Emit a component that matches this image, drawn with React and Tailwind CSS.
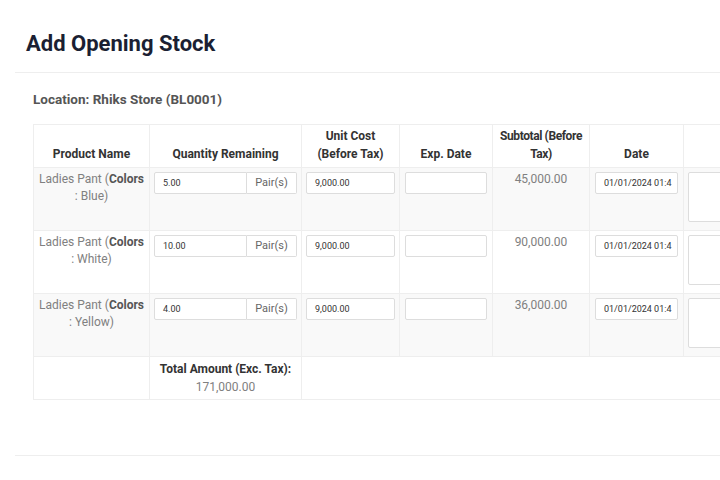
import * as React from 'react';

const rows = [
    { color: 'Blue', qty: '5.00', subtotal: '45,000.00', shaded: true },
    { color: 'White', qty: '10.00', subtotal: '90,000.00', shaded: false },
    { color: 'Yellow', qty: '4.00', subtotal: '36,000.00', shaded: true },
];

function StockRow({ row }) {
    const cell = "border border-[#eeeeee] align-top px-1 pt-1 pb-0";
    const input = "h-[22px] w-full overflow-hidden whitespace-nowrap rounded-[2px] border border-[#dddddd] bg-white px-2 text-[9px] leading-[20px] text-[#333333]";

    return (
        <tr className={row.shaded ? "h-[63px] bg-[#f9f9f9]" : "h-[63px] bg-white"}>
            <td className={cell + " text-center text-[12px] leading-[17px] text-[#808080] pt-[3px]"}>
                Ladies Pant (<b className="font-bold text-[#555555]">Colors</b> : {row.color})
            </td>
            <td className={cell}>
                <div className="flex h-[22px]">
                    <div className="h-[22px] flex-1 rounded-l-[2px] border border-[#dddddd] bg-white px-2 text-[9px] leading-[20px] text-[#333333]">{row.qty}</div>
                    <div className="h-[22px] w-[50px] rounded-r-[2px] border border-l-0 border-[#dddddd] bg-white text-center text-[11px] leading-[20px] text-[#666666]">Pair(s)</div>
                </div>
            </td>
            <td className={cell}>
                <div className={input}>9,000.00</div>
            </td>
            <td className={cell + " px-[5px]"}>
                <div className={input}></div>
            </td>
            <td className={cell + " text-center text-[12px] leading-[17px] text-[#808080] pt-[3px]"}>
                {row.subtotal}
            </td>
            <td className={cell + " px-[5px]"}>
                <div className={input}>01/01/2024 01:4</div>
            </td>
            <td className={cell}>
                <div className="h-[50px] w-full rounded-[2px] border border-[#dddddd] bg-white"></div>
            </td>
        </tr>
    );
}

function App() {
    const head = "border border-[#eeeeee] align-bottom px-1 pb-1 text-center text-[12px] font-bold leading-[18px] text-[#333333]";

    return (
        <div className="h-[480px] w-[720px] overflow-hidden bg-white font-['Roboto',sans-serif]">
            <div className="pl-[15px]">
                <div className="border-b border-[#eeeeee] pl-[11px] pt-[31px] pb-[15px]">
                    <h1 className="text-[22px] font-bold leading-[26px] text-[#1b1f33]">Add Opening Stock</h1>
                </div>

                <div className="pl-[18px] pt-[18px]">
                    <p className="text-[13.5px] font-bold leading-[16px] text-[#555555]">Location: Rhiks Store (BL0001)</p>

                    <table className="mt-[17px] w-[770px] table-fixed border-collapse">
                        <colgroup>
                            <col className="w-[116px]" />
                            <col className="w-[152px]" />
                            <col className="w-[98px]" />
                            <col className="w-[93px]" />
                            <col className="w-[97px]" />
                            <col className="w-[94px]" />
                            <col className="w-[120px]" />
                        </colgroup>
                        <thead>
                            <tr className="h-[43px]">
                                <th className={head}>Product Name</th>
                                <th className={head}>Quantity Remaining</th>
                                <th className={head}>Unit Cost (Before Tax)</th>
                                <th className={head}>Exp. Date</th>
                                <th className={head + " px-0 whitespace-nowrap tracking-[-0.4px]"}>
                                    Subtotal (Before
                                    <br />
                                    Tax)
                                </th>
                                <th className={head}>Date</th>
                                <th className={head}></th>
                            </tr>
                        </thead>
                        <tbody>
                            {rows.map((row) => (
                                <StockRow key={row.color} row={row} />
                            ))}
                        </tbody>
                        <tfoot>
                            <tr className="h-[43px] bg-white">
                                <td className="border border-[#eeeeee]"></td>
                                <td className="border border-[#eeeeee] align-top px-1 pt-[3px] text-center text-[12px] leading-[18px]">
                                    <div className="font-bold text-[#333333]">Total Amount (Exc. Tax):</div>
                                    <div className="text-[#808080]">171,000.00</div>
                                </td>
                                <td colSpan={5} className="border border-[#eeeeee] border-r-0"></td>
                            </tr>
                        </tfoot>
                    </table>
                </div>

                <div className="mt-[55px] border-t border-[#eeeeee]"></div>
            </div>
        </div>
    );
}

export default App;
